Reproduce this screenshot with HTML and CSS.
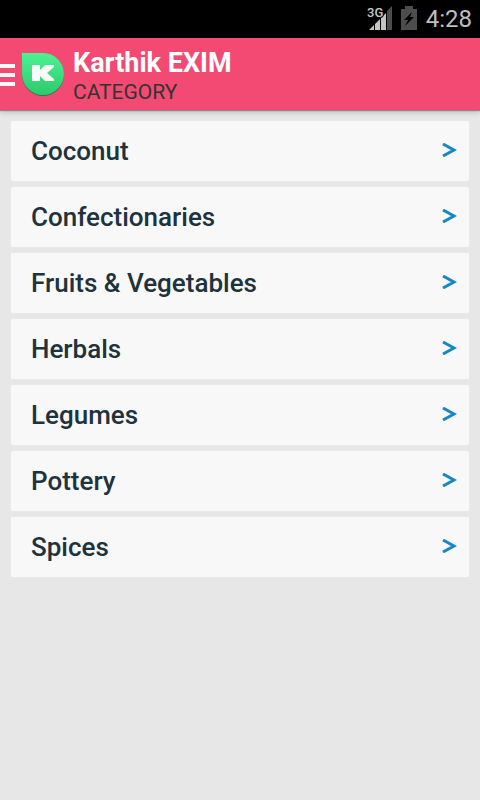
FILE: index.html
```html
<!DOCTYPE html>
<html lang="en">
<head>
<meta charset="utf-8">
<meta name="viewport" content="width=device-width, initial-scale=1">
<title>Karthik EXIM</title>
<link rel="stylesheet" href="styles.css">
</head>
<body>
<div class="status">
  <svg class="signal" viewBox="0 0 26 26" role="img" aria-label="3G signal">
    <path fill="#4d4d4d" d="M20 6l5-5v24h-5z"/>
    <path fill="#c4c4c4" d="M2 25l5-5v5zM8 19l5-5v11H8zM14 13l5-5v17h-5z"/>
    <text class="network" x="0" y="12">3G</text>
  </svg>
  <svg class="battery" viewBox="0 0 16 24" role="img" aria-label="Battery charging">
    <path fill="#4d4d4d" d="M4 0h8v3h4v21H0V3h4z"/>
    <path fill="#000" d="M11 6L3 14h4l-3 6 9-9H9l2-5z"/>
  </svg>
  <time class="clock">4:28</time>
</div>
<header class="bar">
  <button class="menu" aria-label="Open menu"><span class="line"></span><span class="line"></span><span class="line"></span></button>
  <svg class="logo" viewBox="0 0 44 45" aria-hidden="true">
    <defs><linearGradient id="leaf" x1="0" y1="0" x2="0" y2="1"><stop offset="0" stop-color="#4cf291"/><stop offset="1" stop-color="#2cca6d"/></linearGradient></defs>
    <path fill="#3b6f50" d="M1 2h21a21 21 0 1 1-21 21z"/>
    <path fill="url(#leaf)" d="M1 1h21a21 21 0 1 1-21 21z"/>
    <path fill="#fbfbfb" d="M11 13h8v5l5-5h9v2l-7 6 7 6v2h-9l-5-5v5h-8z"/>
  </svg>
  <div class="titles">
    <h1 class="title">Karthik EXIM</h1>
    <p class="subtitle">CATEGORY</p>
  </div>
</header>
<main>
  <ul class="list">
    <li><a class="card" href="#coconut">Coconut<svg class="arrow" viewBox="0 0 15 14" aria-hidden="true"><path d="M1 1l11 6-11 6"/></svg></a></li>
    <li><a class="card" href="#confectionaries">Confectionaries<svg class="arrow" viewBox="0 0 15 14" aria-hidden="true"><path d="M1 1l11 6-11 6"/></svg></a></li>
    <li><a class="card" href="#fruits">Fruits &amp; Vegetables<svg class="arrow" viewBox="0 0 15 14" aria-hidden="true"><path d="M1 1l11 6-11 6"/></svg></a></li>
    <li><a class="card" href="#herbals">Herbals<svg class="arrow" viewBox="0 0 15 14" aria-hidden="true"><path d="M1 1l11 6-11 6"/></svg></a></li>
    <li><a class="card" href="#legumes">Legumes<svg class="arrow" viewBox="0 0 15 14" aria-hidden="true"><path d="M1 1l11 6-11 6"/></svg></a></li>
    <li><a class="card" href="#pottery">Pottery<svg class="arrow" viewBox="0 0 15 14" aria-hidden="true"><path d="M1 1l11 6-11 6"/></svg></a></li>
    <li><a class="card" href="#spices">Spices<svg class="arrow" viewBox="0 0 15 14" aria-hidden="true"><path d="M1 1l11 6-11 6"/></svg></a></li>
  </ul>
</main>
</body>
</html>
```
FILE: styles.css
```css
* { box-sizing: border-box; }
body {
  margin: 0;
  min-height: 100vh;
  background: #e7e7e7;
  font-family: Roboto, "Liberation Sans", sans-serif;
}
.status {
  display: flex;
  align-items: center;
  justify-content: flex-end;
  height: 38px;
  padding: 0 8px;
  background: #000;
}
.signal { width: 26px; height: 26px; margin: 0 8px 2px 0; overflow: visible; }
.network {
  fill: #c4c4c4;
  stroke: #000;
  stroke-width: 2px;
  paint-order: stroke;
  font-size: 13px;
  font-weight: 500;
}
.battery { width: 16px; height: 24px; margin: 0 9px 2px 0; }
.clock { color: #bebebe; font-size: 24px; line-height: 38px; }
.bar {
  display: flex;
  align-items: center;
  height: 72px;
  background: #f24a72;
  box-shadow: 0 1px 1px #888, 0 2px 6px #0003;
}
.menu {
  display: flex;
  flex-direction: column;
  gap: 5px;
  width: 15px;
  margin-right: 6px;
  padding: 2px 0 0;
  border: 0;
  background: none;
}
.line { width: 100%; height: 4px; background: #f8f8f8; }
.logo { width: 44px; height: 45px; margin-right: 8px; }
.titles { padding-top: 5px; }
.title, .subtitle { margin: 0; }
.title { color: #fff; font-size: 27px; line-height: 30px; font-weight: 700; }
.subtitle { color: #333; font-size: 21px; line-height: 28px; font-weight: 400; }
.list {
  display: flex;
  flex-direction: column;
  gap: 6px;
  margin: 0;
  padding: 11px 11px;
  list-style: none;
}
.card {
  display: flex;
  align-items: center;
  justify-content: space-between;
  height: 60px;
  padding: 0 12px 0 20px;
  border-radius: 2px;
  background: #f8f8f8;
  box-shadow: 0 0 1px #fff;
  color: #20323c;
  font-size: 26px;
  line-height: 32px;
  font-weight: 500;
  text-decoration: none;
}
.arrow { width: 15px; height: 14px; margin-bottom: 2px; }
.arrow path { fill: none; stroke: #1587c4; stroke-width: 3; }
```
